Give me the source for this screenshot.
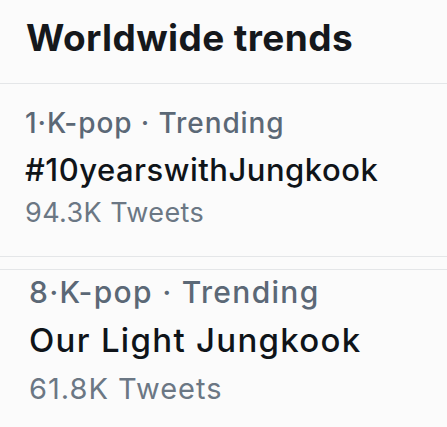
import React from "react";

export default function App() {
  return (
    <div className="w-[447px] h-[427px] overflow-hidden bg-[#fbfbfb] font-['Inter',sans-serif]">
      <div className="pt-[16px] pb-[23px] pl-[26px]">
        <div className="text-[37px] leading-[44px] font-bold text-[#15181c] tracking-[0.4px]">
          Worldwide trends
        </div>
      </div>
      <div className="h-px bg-[#e4e6e8]" />
      <div className="pl-[25px] pt-[24px]">
        <div className="text-[28px] leading-[30px] font-medium text-[#5b6876] tracking-[0.9px]">
          1·K-pop · Trending
        </div>
        <div className="mt-[15px] text-[31px] leading-[34px] font-medium text-[#0f1419] tracking-[0.5px]">
          #10yearswithJungkook
        </div>
        <div className="mt-[11px] text-[27px] leading-[30px] text-[#6b7784] tracking-[0.4px]">
          94.3K Tweets
        </div>
      </div>
      <div className="mt-[28px] h-px bg-[#e4e6e8]" />
      <div className="mt-[12px] h-px bg-[#e4e6e8]" />
      <div className="pl-[29px] pt-[6px]">
        <div className="text-[30px] leading-[32px] font-medium text-[#5b6876] tracking-[1.3px]">
          8·K-pop · Trending
        </div>
        <div className="mt-[14px] text-[33px] leading-[36px] font-medium text-[#0f1419] tracking-[1.3px]">
          Our Light Jungkook
        </div>
        <div className="mt-[14px] text-[29px] leading-[34px] text-[#6b7784] tracking-[1px]">
          61.8K Tweets
        </div>
      </div>
    </div>
  );
}
